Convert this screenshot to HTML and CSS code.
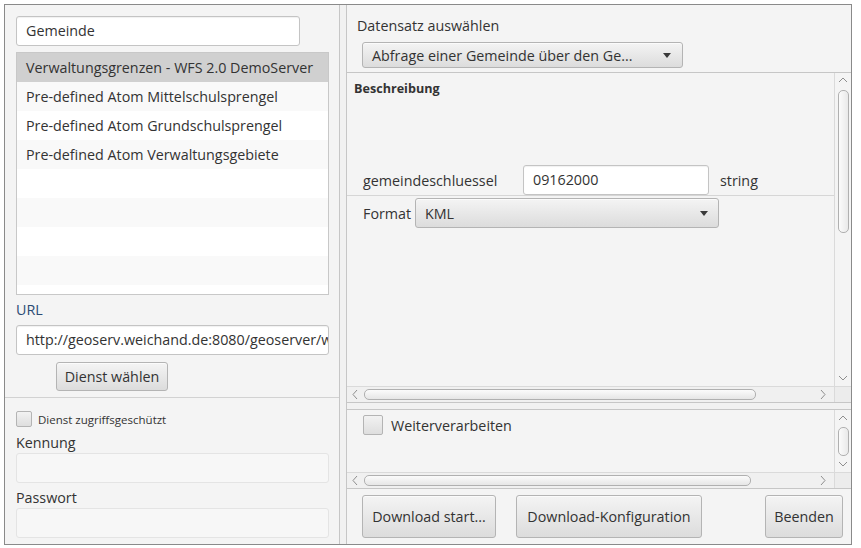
FILE: index.html
```html
<!DOCTYPE html>
<html lang="de">
<head>
<meta charset="utf-8">
<title>Download</title>
<link rel="stylesheet" href="styles.css">
</head>
<body>
<div class="window">
  <div class="left">
    <div class="left-top">
      <div class="field search">Gemeinde</div>
      <div class="list">
        <div class="row sel">Verwaltungsgrenzen - WFS 2.0 DemoServer</div>
        <div class="row odd">Pre-defined Atom Mittelschulsprengel</div>
        <div class="row">Pre-defined Atom Grundschulsprengel</div>
        <div class="row odd">Pre-defined Atom Verwaltungsgebiete</div>
        <div class="row"></div>
        <div class="row odd"></div>
        <div class="row"></div>
        <div class="row odd"></div>
        <div class="row"></div>
      </div>
      <div class="label url">URL</div>
      <div class="field">http://geoserv.weichand.de:8080/geoserver/wfs</div>
      <div class="btn btn-service">Dienst wählen</div>
    </div>
    <div class="left-bottom">
      <div class="check-row small"><span class="box"></span><span>Dienst zugriffsgeschützt</span></div>
      <div class="label">Kennung</div>
      <div class="field disabled"></div>
      <div class="label label-pw">Passwort</div>
      <div class="field disabled"></div>
    </div>
  </div>
  <div class="divider-v"></div>
  <div class="right">
    <div class="r-head">
      <div class="label">Datensatz auswählen</div>
      <div class="combo combo-ds"><span>Abfrage einer Gemeinde über den Ge...</span><span class="tri"></span></div>
    </div>
    <div class="sp sp1">
      <div class="sp-body">
        <div class="sp-content">
          <div class="desc">Beschreibung</div>
          <div class="param-row">
            <span class="p-label">gemeindeschluessel</span>
            <div class="field p-field">09162000</div>
            <span class="p-type">string</span>
          </div>
          <div class="format-row">
            <span class="f-label">Format</span>
            <div class="combo combo-fmt"><span>KML</span><span class="tri"></span></div>
          </div>
        </div>
        <div class="vscroll">
          <svg class="arr" width="10" height="14" viewBox="0 0 10 14"><polyline points="1,9 5,5 9,9" fill="none" stroke="#8e8e8e" stroke-width="1"/></svg>
          <div class="vthumb vthumb1"></div>
          <svg class="arr arr-down" width="10" height="14" viewBox="0 0 10 14"><polyline points="1,5 5,9 9,5" fill="none" stroke="#8e8e8e" stroke-width="1"/></svg>
        </div>
      </div>
      <div class="hscroll">
        <div class="htrack">
          <svg class="harr" width="16" height="15" viewBox="0 0 16 15"><polyline points="10,3 6,7.5 10,12" fill="none" stroke="#8e8e8e" stroke-width="1"/></svg>
          <div class="hthumb hthumb1"></div>
          <svg class="harr harr-r" width="16" height="15" viewBox="0 0 16 15"><polyline points="6,3 10,7.5 6,12" fill="none" stroke="#8e8e8e" stroke-width="1"/></svg>
        </div>
        <div class="corner"></div>
      </div>
    </div>
    <div class="divider-h"></div>
    <div class="sp sp2">
      <div class="sp-body sp-body2">
        <div class="sp-content">
          <div class="check-row big"><span class="box"></span><span>Weiterverarbeiten</span></div>
        </div>
        <div class="vscroll">
          <svg class="arr" width="10" height="14" viewBox="0 0 10 14"><polyline points="1,9 5,5 9,9" fill="none" stroke="#8e8e8e" stroke-width="1"/></svg>
          <div class="vthumb vthumb2"></div>
          <svg class="arr arr-down" width="10" height="14" viewBox="0 0 10 14"><polyline points="1,5 5,9 9,5" fill="none" stroke="#8e8e8e" stroke-width="1"/></svg>
        </div>
      </div>
      <div class="hscroll">
        <div class="htrack">
          <svg class="harr" width="16" height="15" viewBox="0 0 16 15"><polyline points="10,3 6,7.5 10,12" fill="none" stroke="#8e8e8e" stroke-width="1"/></svg>
          <div class="hthumb hthumb2"></div>
          <svg class="harr harr-r" width="16" height="15" viewBox="0 0 16 15"><polyline points="6,3 10,7.5 6,12" fill="none" stroke="#8e8e8e" stroke-width="1"/></svg>
        </div>
        <div class="corner"></div>
      </div>
    </div>
    <div class="buttons">
      <div class="btn btn-big btn-start">Download start...</div>
      <div class="btn btn-big btn-conf">Download-Konfiguration</div>
      <div class="btn btn-big btn-end">Beenden</div>
    </div>
  </div>
</div>
</body>
</html>
```
FILE: styles.css
```css
* { box-sizing: border-box; }
html, body { margin: 0; padding: 0; background: #ffffff; }
body {
  font-family: "Open Sans", "Noto Sans", sans-serif;
  font-size: 14.3px;
  color: #333;
}
.window {
  margin: 4px 0 0 4px;
  width: 848px;
  height: 541px;
  border: 1px solid #8a8a8a;
  background: #f4f4f4;
  display: flex;
}
/* ---------- left ---------- */
.left { width: 334px; display: flex; flex-direction: column; }
.left-top {
  padding: 11px 10px 6px 11px;
  border-bottom: 1px solid #d2d2d2;
  display: flex; flex-direction: column; align-items: flex-start;
}
.left-bottom {
  padding: 13px 10px 0 11px;
  display: flex; flex-direction: column;
}
.field {
  height: 30px;
  width: 313px;
  border: 1px solid #c4c4c4;
  border-radius: 3px;
  background: #fff;
  padding: 0 9px;
  line-height: 28px;
  white-space: nowrap;
  overflow: hidden;
  box-shadow: inset 0 1px 1px rgba(0,0,0,0.06);
}
.field.search { width: 284px; }
.field.disabled { background: #f7f7f7; border-color: #e4e4e4; box-shadow: none; }
.list {
  margin-top: 6px;
  width: 313px;
  height: 243px;
  border: 1px solid #c8c8c8;
  background: #fff;
  overflow: hidden;
}
.row { height: 29px; line-height: 29px; padding-left: 9px; background: #fff; white-space: nowrap; }
.row.odd { background: #f9f9f9; }
.row.sel { background: #d0d0d0; }
.label { height: 20px; line-height: 20px; margin-top: 5px; margin-bottom: 5px; }
.label.url { color: #2b4b73; }
.left-bottom .label { margin: 6px 0 0 0; }
.left-bottom .label.label-pw { margin-top: 5px; }
.btn {
  border: 1px solid #b4b4b4;
  border-radius: 3px;
  background: linear-gradient(#f4f4f4, #dcdcdc);
  box-shadow: inset 0 1px 0 #fbfbfb;
  display: flex; align-items: center; justify-content: center;
  white-space: nowrap;
}
.btn-service { margin: 7px 0 0 40px; width: 112px; height: 29px; }
.check-row { display: flex; align-items: center; }
.check-row .box {
  border: 1px solid #b4b4b4;
  border-radius: 2px;
  background: linear-gradient(#f2f2f2, #dedede);
}
.check-row.small { font-size: 11.5px; height: 16px; }
.check-row.small .box { width: 16px; height: 16px; margin-right: 6px; }
.check-row.big { padding: 5px 0 0 16px; }
.check-row.big .box { width: 20px; height: 20px; margin-right: 8px; }
/* ---------- dividers ---------- */
.divider-v {
  width: 8px;
  border-left: 1px solid #c6c6c6;
  border-right: 1px solid #c6c6c6;
  background: #f1f1f1;
}
.divider-h {
  height: 8px;
  border-top: 1px solid #c6c6c6;
  border-bottom: 1px solid #c6c6c6;
  background: #f1f1f1;
}
/* ---------- right ---------- */
.right { width: 504px; display: flex; flex-direction: column; }
.r-head { height: 67px; padding: 11px 0 0 10px; }
.r-head .label { margin: 0; }
.combo {
  border: 1px solid #b4b4b4;
  border-radius: 3px;
  background: linear-gradient(#f4f4f4, #dcdcdc);
  box-shadow: inset 0 1px 0 #fbfbfb;
  display: flex; align-items: center; justify-content: space-between;
  padding: 0 11px 0 9px;
  white-space: nowrap;
}
.combo-ds { margin: 6px 0 0 5px; width: 321px; height: 26px; }
.tri {
  width: 0; height: 0;
  border-left: 4.5px solid transparent;
  border-right: 4.5px solid transparent;
  border-top: 5px solid #3a3a3a;
}
.sp { display: flex; flex-direction: column; }
.sp1 { border-top: 1px solid #c6c6c6; height: 330px; }
.sp2 { border-bottom: 1px solid #c6c6c6; height: 79px; }
.sp-body { display: flex; flex: 1; min-height: 0; }
.sp-content { flex: 1; min-width: 0; }
.desc { font-weight: bold; font-size: 12.6px; line-height: 16px; padding: 8px 0 0 7px; height: 92px; }
.param-row {
  display: flex; align-items: center;
  height: 31px;
  padding-left: 16px;
  border-bottom: 1px solid #d6d6d6;
}
.p-label { width: 160px; }
.p-field { width: 186px; }
.p-type { margin-left: 11px; }
.format-row { display: flex; align-items: center; padding: 2px 0 0 16px; }
.f-label { width: 52px; }
.combo-fmt { width: 304px; height: 30px; padding-left: 9px; padding-right: 10px; }
.vscroll {
  width: 17px;
  border-left: 1px solid #dadada;
  display: flex; flex-direction: column; align-items: center;
  background: #f4f4f4;
}
.arr { display: block; flex: none; }
.arr-down { margin-top: auto; margin-bottom: 1px; }
.vthumb {
  width: 11px;
  border: 1px solid #b0b0b0;
  border-radius: 5px;
  background: linear-gradient(to right, #fbfbfb, #e9e9e9);
  margin-top: 3px;
}
.vthumb1 { height: 143px; }
.sp-body2 .arr:first-child { margin-top: 1px; }
.vthumb2 { height: 29px; margin-top: 2px; }
.hscroll { height: 16px; display: flex; border-top: 1px solid #dadada; background: #f0f0f0; }
.htrack { flex: 1; display: flex; align-items: center; }
.harr { display: block; flex: none; }
.harr-r { margin-left: auto; margin-right: 3px; }
.hthumb {
  height: 11px;
  border: 1px solid #b0b0b0;
  border-radius: 5px;
  background: linear-gradient(#fbfbfb, #e6e6e6);
  margin-left: 1px;
}
.hthumb1 { width: 392px; }
.hthumb2 { width: 387px; }
.corner { width: 17px; border-left: 1px solid #dadada; background: #ececec; }
.buttons { display: flex; padding: 6px 8px 0 15px; height: 55px; }
.btn-big { height: 43px; padding: 0; }
.btn-start { width: 134px; }
.btn-conf { width: 186px; margin-left: 20px; }
.btn-end { width: 78px; margin-left: auto; }
```
